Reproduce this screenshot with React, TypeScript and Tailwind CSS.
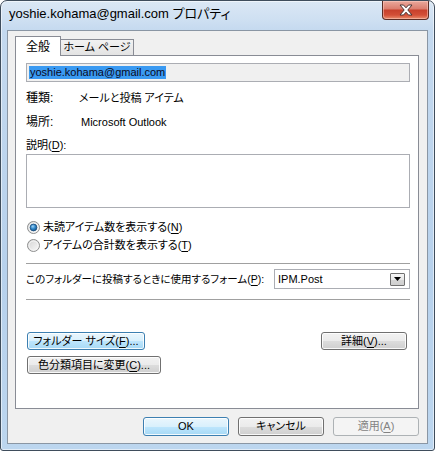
import React from "react";

const jp = "[font-family:'Liberation_Sans','Noto_Sans_CJK_JP',sans-serif] [font-feature-settings:'palt']";

function U({ children }: { children: React.ReactNode }) {
  return <span className="underline underline-offset-[2px] decoration-[1px]">{children}</span>;
}

type BtnKind = "normal" | "blue" | "disabled";

function Btn({
  kind = "normal",
  className = "",
  children,
}: {
  kind?: BtnKind;
  className?: string;
  children: React.ReactNode;
}) {
  const base =
    "flex items-center justify-center whitespace-nowrap rounded-[3px] border text-[11px] leading-none shadow-[inset_0_0_0_1px_rgba(255,255,255,0.85)]";
  const styles: Record<BtnKind, string> = {
    normal:
      "border-[#707070] text-black bg-[linear-gradient(180deg,#f2f2f2_0%,#ebebeb_50%,#dddddd_50%,#cfcfcf_100%)]",
    blue:
      "border-[#3c7fb1] text-black bg-[linear-gradient(180deg,#eaf6fd_0%,#d9f0fc_50%,#bee6fd_50%,#a7d9f5_100%)]",
    disabled: "border-[#adb2b5] text-[#838383] bg-[#f4f4f4] shadow-none",
  };
  return <div className={`${base} ${styles[kind]} ${className}`}>{children}</div>;
}

function Radio({ checked }: { checked: boolean }) {
  return (
    <svg width="13" height="13" viewBox="0 0 13 13">
      <defs>
        <linearGradient id={checked ? "rgc" : "rgu"} x1="0" y1="0" x2="1" y2="1">
          <stop offset="0" stopColor="#d2d2d2" />
          <stop offset="1" stopColor="#fbfbfb" />
        </linearGradient>
        <radialGradient id="dot" cx="0.4" cy="0.35" r="0.7">
          <stop offset="0" stopColor="#9fd4f8" />
          <stop offset="0.5" stopColor="#2f86c8" />
          <stop offset="1" stopColor="#124f86" />
        </radialGradient>
      </defs>
      <circle cx="6.5" cy="6.5" r="6" fill={`url(#${checked ? "rgc" : "rgu"})`} stroke="#8e8f8f" strokeWidth="1" />
      <circle cx="6.5" cy="6.5" r="4.5" fill="none" stroke="#f4f4f4" strokeWidth="1" />
      {checked && <circle cx="6.5" cy="6.5" r="3.4" fill="url(#dot)" stroke="#1b4d7c" strokeWidth="0.8" />}
    </svg>
  );
}

function CloseX() {
  return (
    <svg width="14" height="12" viewBox="0 0 14 12">
      <path
        d="M1 1 H4.5 L7 3.8 L9.5 1 H13 L8.8 6 L13 11 H9.5 L7 8.2 L4.5 11 H1 L5.2 6 Z"
        fill="#ffffff"
        stroke="#4a3535"
        strokeWidth="1"
        strokeLinejoin="round"
      />
    </svg>
  );
}

export default function App() {
  return (
    <div className={`w-[435px] h-[451px] ${jp}`}>
      <div className="relative w-[435px] h-[451px] overflow-hidden rounded-t-[7px] rounded-b-[3px] border border-[#3f4d5c] bg-[linear-gradient(180deg,#dbe8f5_0px,#cfe0f2_18px,#c4d9ef_30px,#b7d1ec_60%,#bcd6ef_100%)] shadow-[inset_0_0_0_1px_rgba(255,255,255,0.55)]">
        {/* title bar */}
        <div className="h-[29px] flex items-start justify-between">
          <div className="pl-[8px] pt-[5px] text-[13px] leading-[16px] text-black whitespace-nowrap">
            yoshie.kohama@gmail.com <span>プロパティ</span>
          </div>
          <div className="mr-[5px] w-[47px] h-[19px] flex items-center justify-center rounded-b-[4px] border border-t-0 border-[#5b2d25] bg-[linear-gradient(180deg,#eaa99c_0%,#dc7f70_42%,#c8412c_52%,#d34f37_78%,#ea8d6c_100%)] shadow-[inset_0_0_0_1px_rgba(255,210,200,0.5)]">
            <CloseX />
          </div>
        </div>

        {/* client */}
        <div className="mx-[6px] h-[414px] border border-[#8a96a4] bg-[#f0f0f0] flex flex-col">
          {/* tabs */}
          <div className="pt-[5px] pl-[7px] flex items-end h-[24px]">
            <div className="relative z-10 -mb-px w-[46px] h-[20px] bg-white border border-b-0 border-[#898c95] flex items-center justify-center text-[12px] leading-none whitespace-nowrap">
              全般
            </div>
            <div className="w-[73px] h-[16px] border border-l-0 border-b-0 border-[#898c95] bg-[linear-gradient(180deg,#f2f2f2,#e3e3e3)] flex items-center justify-center text-[11px] leading-none whitespace-nowrap">
              ホーム ページ
            </div>
          </div>

          {/* panel */}
          <div className="ml-[7px] w-[404px] h-[354px] bg-white border border-[#898c95] flex flex-col px-[10px] text-[11px] leading-none text-black whitespace-nowrap">
            <div className="mt-[7px] h-[19px] w-[384px] border border-[#abadb3] bg-[#f0f0f0] flex items-center pl-[2px]">
              <span className="bg-[#3a9af2] text-[#0a0a1e] px-[1px] h-[13px] flex items-center">yoshie.kohama@gmail.com</span>
            </div>

            <div className="mt-[9px] h-[14px] flex items-center">
              <span className="w-[53px] text-[12px]">種類:</span>
              <span>メールと投稿 アイテム</span>
            </div>
            <div className="mt-[10px] h-[14px] flex items-center">
              <span className="w-[55px] text-[12px]">場所:</span>
              <span>Microsoft Outlook</span>
            </div>
            <div className="mt-[9px] h-[14px] flex items-center">
              説明(<U>D</U>):
            </div>
            <div className="mt-[2px] h-[54px] w-[384px] border border-[#abadb3] bg-white" />

            <div className="mt-[10px] h-[18px] flex items-center gap-[3px] pl-[1px]">
              <Radio checked />
              <span>未読アイテム数を表示する(<U>N</U>)</span>
            </div>
            <div className="h-[18px] flex items-center gap-[3px] pl-[1px]">
              <Radio checked={false} />
              <span>アイテムの合計数を表示する(<U>T</U>)</span>
            </div>

            <div className="mt-[9px] h-px w-[384px] bg-[#a0a0a0]" />

            <div className="mt-[5px] h-[20px] w-[384px] flex items-center justify-between">
              <span className="text-[10.5px]">このフォルダーに投稿するときに使用するフォーム(<U>P</U>):</span>
              <div className="w-[136px] h-[20px] border border-[#abadb3] bg-white flex items-center justify-between pl-[3px] pr-[4px]">
                <span>IPM.Post</span>
                <div className="w-[15px] h-[13px] border border-[#707070] rounded-[1px] bg-[linear-gradient(180deg,#f6f6f6_0%,#e8e8e8_50%,#d6d6d6_50%,#cfcfcf_100%)] flex items-center justify-center">
                  <svg width="7" height="4" viewBox="0 0 7 4">
                    <path d="M0 0 H7 L3.5 4 Z" fill="#000" />
                  </svg>
                </div>
              </div>
            </div>

            <div className="mt-[10px] h-px w-[384px] bg-[#a0a0a0]" />

            <div className="mt-[32px] flex items-center justify-between pl-[1px] pr-[1px]">
              <Btn kind="blue" className="w-[118px] h-[18px]">
                フォルダー サイズ(<U>F</U>)...
              </Btn>
              <Btn className="w-[86px] h-[18px]">
                詳細(<U>V</U>)...
              </Btn>
            </div>
            <div className="mt-[6px] pl-[1px]">
              <Btn className="w-[134px] h-[18px]">
                色分類項目に変更(<U>C</U>)...
              </Btn>
            </div>
          </div>

          {/* bottom buttons */}
          <div className="mt-[8px] flex justify-end gap-[9px] pr-[8px]">
            <Btn kind="blue" className="w-[86px] h-[19px]">
              OK
            </Btn>
            <Btn className="w-[86px] h-[19px]">キャンセル</Btn>
            <Btn kind="disabled" className="w-[86px] h-[19px]">
              適用(<U>A</U>)
            </Btn>
          </div>
        </div>
      </div>
    </div>
  );
}
